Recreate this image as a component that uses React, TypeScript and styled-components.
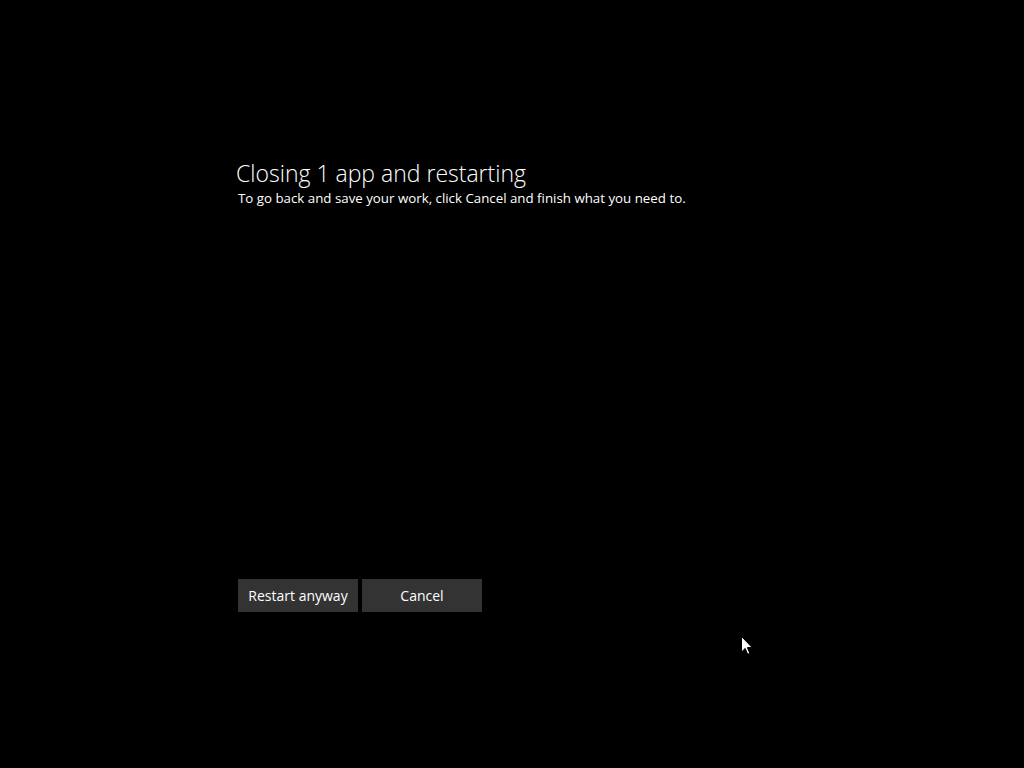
import { FC } from 'react';
import styled, { createGlobalStyle } from 'styled-components';

const GlobalStyle = createGlobalStyle`
  html, body {
    margin: 0;
    padding: 0;
    background: #000000;
  }
  body {
    font-family: 'Open Sans', 'Noto Sans', sans-serif;
    color: #ffffff;
  }
`;

const App: FC = () => {
  return (
    <>
      <GlobalStyle />
      <Screen>
        <Content>
          <Title>Closing 1 app and restarting</Title>
          <Subtitle>To go back and save your work, click Cancel and finish what you need to.</Subtitle>
          <Spacer />
          <ButtonRow>
            <ActionButton>Restart anyway</ActionButton>
            <ActionButton>Cancel</ActionButton>
          </ButtonRow>
        </Content>
        <Cursor width="12" height="20" viewBox="0 0 12 20">
          <path d="M0.5 0.5 L0.5 16 L4.2 12.4 L6.6 18.2 L8.8 17.3 L6.4 11.6 L11.2 11.6 Z" fill="#ffffff" stroke="#000000" strokeWidth="1" />
        </Cursor>
      </Screen>
    </>
  );
};

export default App;

const Screen = styled.div`
  position: relative;
  width: 1024px;
  height: 768px;
  background: #000000;
  overflow: hidden;
`;

const Content = styled.div`
  display: flex;
  flex-direction: column;
  padding: 157px 0 0 236px;
  height: 455px;
`;

const Title = styled.div`
  font-size: 23px;
  font-weight: 300;
  line-height: 32px;
  color: #ffffff;
`;

const Subtitle = styled.div`
  font-size: 13.3px;
  line-height: 18px;
  margin-left: 2px;
  color: #ffffff;
`;

const Spacer = styled.div`
  flex: 1;
`;

const ButtonRow = styled.div`
  display: flex;
  gap: 4px;
  margin-left: 2px;
`;

const ActionButton = styled.button`
  width: 120px;
  height: 33px;
  border: none;
  padding: 0;
  background: #333333;
  color: #ffffff;
  font-family: 'Open Sans', 'Noto Sans', sans-serif;
  font-size: 14px;
`;

const Cursor = styled.svg`
  position: absolute;
  left: 741px;
  top: 636px;
`;
